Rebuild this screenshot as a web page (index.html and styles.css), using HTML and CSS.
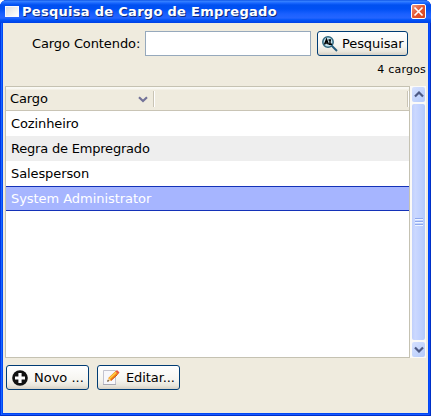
FILE: index.html
```html
<!DOCTYPE html>
<html lang="pt-BR">
<head>
<meta charset="utf-8">
<title>Pesquisa de Cargo de Empregado</title>
<link rel="stylesheet" href="styles.css">
</head>
<body>
<div class="window">
  <header class="titlebar">
    <span class="app-icon"></span>
    <h1 class="title">Pesquisa de Cargo de Empregado</h1>
    <button class="close" aria-label="Fechar"><svg width="13" height="13" viewBox="0 0 13 13"><path d="M2.500 2.500l8 8M10.500 2.500l-8 8" stroke="#fff" stroke-width="1.700"/></svg></button>
  </header>
  <main class="content">
    <div class="search">
      <label class="label" for="q">Cargo Contendo:</label>
      <input class="field" id="q" type="text">
      <button class="btn btn-search">
        <svg width="18" height="18" viewBox="0 0 18 18"><path d="M10.500 10.500l5.500 5.500" stroke="#245b7c" stroke-width="1.900"/><circle cx="7" cy="7" r="5.200" fill="#c4e2ed" stroke="#30677f" stroke-width="1.500"/><path d="M3.500 9.500L5.500 4.500 7.500 9.500M4.500 8h2.500M9 4.500v5M7.500 5h2.500M8 9.200h3" stroke="#000" stroke-width="1.400" fill="none"/></svg>
        <span>Pesquisar</span>
      </button>
    </div>
    <div class="count">4 cargos</div>
    <div class="list">
      <div class="table">
        <div class="thead">
          <div class="th"><span>Cargo</span><svg width="10" height="7" viewBox="0 0 10 7"><path d="M1 1.200L5 5 9 1.200" fill="none" stroke="#737399" stroke-width="2.200"/></svg></div>
          <div class="th rest"></div>
        </div>
        <div class="row">Cozinheiro</div>
        <div class="row alt">Regra de Empregrado</div>
        <div class="row">Salesperson</div>
        <div class="row selected">System Administrator</div>
      </div>
      <div class="scroll">
        <div class="arrow"><svg width="10" height="7" viewBox="0 0 10 7"><path d="M1 5.500L5 1.500 9 5.500" fill="none" stroke="#4d5a85" stroke-width="2.200"/></svg></div>
        <div class="thumb"><i></i><i></i><i></i></div>
        <div class="arrow"><svg width="10" height="7" viewBox="0 0 10 7"><path d="M1 1.500L5 5.500 9 1.500" fill="none" stroke="#4d5a85" stroke-width="2.200"/></svg></div>
      </div>
    </div>
    <div class="actions">
      <button class="btn btn-new">
        <svg width="16" height="16" viewBox="0 0 16 16"><circle cx="8" cy="8" r="7.800" fill="#111"/><path d="M8 3v10M3 8h10" stroke="#fff" stroke-width="3.200"/></svg>
        <span>Novo ...</span>
      </button>
      <button class="btn btn-edit">
        <svg width="18" height="17" viewBox="0 0 18 17"><path d="M1.500 1.500h12v14h-12z" fill="#f7f7fb" stroke="#c3c3cf"/><path d="M1 15.500h13" stroke="#aaaab4"/><path d="M5.500 12.500l1-3.700 7.500-7 2.700 2.700-7.500 7z" fill="#f58a18"/><path d="M7.500 9.500l7-6.500" stroke="#ffd348" stroke-width="1.300"/><path d="M9 11.500l6.500-6" stroke="#ca4d12"/><path d="M13.500 2.500l1.500-1.500 2.500 2.500-1.500 1.500z" fill="#e6573f"/><path d="M5.500 12.500l1-3.700 2.500 2.700z" fill="#f5d7a0"/><path d="M5.200 12.700l.6-1.900 1.400 1.200z" fill="#333"/></svg>
        <span>Editar...</span>
      </button>
    </div>
  </main>
</div>
</body>
</html>
```
FILE: styles.css
```css
* { box-sizing: border-box; }
body { margin: 0; background: #fff; font: 13px "DejaVu Sans", sans-serif; color: #000; }
svg { display: block; flex: none; }
button, input { font: inherit; color: inherit; margin: 0; padding: 0; }
.window { width: 431px; height: 416px; padding: 0 3px 3px; overflow: hidden; border-radius: 7px 7px 0 0; background: #0047f5; box-shadow: inset 1px 0 #0035e5, inset -1px 0 #0030c8, inset 0 -1px #0030c8, inset 2px 0 #1668ff, inset -2px 0 #0b4cff, inset 0 -2px #1759ff; }
.titlebar { display: flex; align-items: center; height: 23px; margin: 0 -3px; padding: 0 5px; background: linear-gradient(#0045df 0, #3a85ff 1px, #1967ff 3px, #0050f0 5px, #0050f4 9px, #1a60ff 14px, #2465ff 18px, #0052f8 20px, #0041e4 23px); }
.app-icon { width: 14px; height: 11px; margin: -1px 3px 0 0; background: linear-gradient(135deg, #dedede, #fff); border: 1px solid #f8f8ff; }
.title { flex: 1; margin: 0; font-size: 13px; line-height: 22px; font-weight: bold; color: #fff; text-shadow: 1px 1px #0b2a80; white-space: nowrap; letter-spacing: 0.29px; }
.close { width: 15px; height: 15px; border: 1px solid #fff; border-radius: 2px; background: linear-gradient(135deg, #f09a83, #e35530 50%, #d64620); display: flex; align-items: center; justify-content: center; }
.content { height: 390px; padding: 8px 2px 0; background: #efebde; }
.search { display: flex; height: 25px; padding-left: 27px; }
.label { width: 113px; line-height: 25px; white-space: nowrap; letter-spacing: -0.1px; }
.field { width: 166px; border: 1px solid #96a9bc; background: #fff; margin-right: 6px; }
.btn { display: flex; align-items: center; height: 25px; border: 1px solid #003c74; border-radius: 3px; background: linear-gradient(#fff, #f6f5f0 60%, #e9e6dc 85%, #d6d0c5); white-space: nowrap; line-height: 23px; }
.btn-search { width: 91px; padding-left: 3px; gap: 3px; letter-spacing: -0.1px; }
.count { height: 30px; padding: 6px 0 0; text-align: right; font-size: 11px; line-height: 16px; white-space: nowrap; letter-spacing: 0.2px; }
.list { display: flex; height: 272px; }
.table { width: 405px; border: 1px solid #c5c2b2; background: #fff; }
.thead { display: flex; height: 24px; padding-top: 4px; background: linear-gradient(#fafaf5 0, #f8f7f0 2px, #efebde 3px); border-bottom: 1px solid #c9c4b5; }
.th { display: flex; align-items: center; justify-content: space-between; width: 148px; height: 16px; padding: 0 5px 0 4px; line-height: 16px; border-right: 1px solid #c9c4b5; box-shadow: 1px 0 #fff; letter-spacing: -0.1px; }
.rest { width: 254px; }
.row { height: 25px; padding-left: 5px; line-height: 25px; white-space: nowrap; letter-spacing: -0.1px; }
.alt { background: #eee; letter-spacing: -0.2px; }
.selected { background: #a6b5ff; color: #fff; border: solid #1432b8; border-width: 1px 0; line-height: 23px; letter-spacing: -0.05px; }
.scroll { display: flex; flex-direction: column; width: 16px; padding: 1px; gap: 2px; background: #fbfaf7; }
.arrow { display: flex; align-items: center; justify-content: center; height: 15px; margin-left: 1px; border-radius: 2px; background: linear-gradient(135deg, #d6e1ff, #b5cbfa); }
.thumb { flex: 1; display: flex; flex-direction: column; align-items: center; justify-content: center; gap: 1px; margin-left: 1px; border-radius: 2px; background: linear-gradient(90deg, #c0d0fc, #cbd8ff 25%, #c1d2ff 60%, #b3cafb); }
.thumb i { width: 8px; height: 2px; border-top: 1px solid #8fa9ee; border-bottom: 1px solid #eef4ff; }
.actions { display: flex; gap: 8px; padding: 7px 0 0 1px; }
.btn-new { width: 83px; padding-left: 5px; gap: 6px; }
.btn-edit { width: 83px; padding-left: 4px; gap: 6px; letter-spacing: -0.1px; }
```
